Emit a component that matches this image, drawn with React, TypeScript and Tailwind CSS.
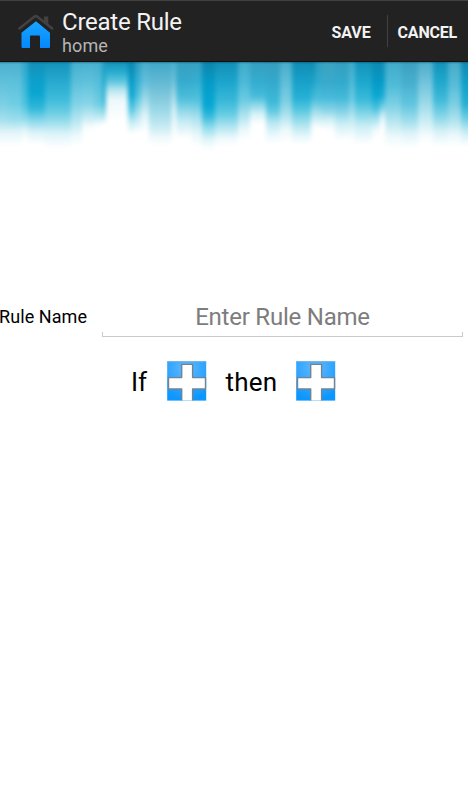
import React from "react";

type Stop = [number, string];
type Strip = { x: number; w: number; stops: Stop[] };

const strips: Strip[] = [
  { x: -12, w: 20, stops: [[0, "#4cb0cf"], [18, "#5dbfda"], [42, "#7bd0e4"], [58, "#a6dfed"], [70, "#e2f5f9"], [84, "#ffffff"]] },
  { x: 8, w: 14, stops: [[0, "#4cb0cf"], [18, "#5bbfdb"], [42, "#6fcee3"], [58, "#9cdeec"], [70, "#e2f5f9"], [84, "#ffffff"]] },
  { x: 22, w: 6, stops: [[0, "#33a6ca"], [18, "#36b3d5"], [42, "#4cc2de"], [56, "#8ad9ea"], [68, "#e2f5f9"], [78, "#ffffff"]] },
  { x: 28, w: 17, stops: [[0, "#158fb7"], [16, "#0d9ec9"], [32, "#0ba6d2"], [46, "#2fb7d9"], [58, "#85d6ea"], [70, "#d9f2f8"], [82, "#ffffff"]] },
  { x: 45, w: 26, stops: [[0, "#1593ba"], [20, "#27abd0"], [38, "#3fbddb"], [50, "#69cde2"], [60, "#9bdeec"], [72, "#ddf4f9"], [86, "#ffffff"]] },
  { x: 71, w: 11, stops: [[0, "#45afce"], [24, "#61c3de"], [44, "#86d5e7"], [60, "#bce8f2"], [74, "#eefafc"], [84, "#ffffff"]] },
  { x: 82, w: 12, stops: [[0, "#48afcd"], [20, "#5fc2dd"], [42, "#88d5e8"], [54, "#c0e9f2"], [66, "#fbfefe"], [74, "#ffffff"]] },
  { x: 94, w: 8, stops: [[0, "#45afce"], [20, "#55bfdb"], [42, "#70cee3"], [54, "#b8e8f2"], [64, "#ffffff"]] },
  { x: 102, w: 4, stops: [[0, "#1f9bc0"], [20, "#23a9cf"], [40, "#3db9d9"], [52, "#9bdeec"], [62, "#ffffff"]] },
  { x: 106, w: 22, stops: [[0, "#1592b8"], [10, "#27acd0"], [20, "#62c8df"], [28, "#b9e6f0"], [38, "#eef9fb"], [60, "#ffffff"]] },
  { x: 128, w: 7, stops: [[0, "#0b86af"], [18, "#089ac7"], [34, "#12a9d4"], [48, "#5dcae3"], [60, "#c1ebf5"], [72, "#ffffff"]] },
  { x: 135, w: 6, stops: [[0, "#309fc1"], [18, "#36afd3"], [34, "#54c2de"], [50, "#a6e0ee"], [70, "#ffffff"]] },
  { x: 141, w: 8, stops: [[0, "#48accb"], [20, "#62c0dc"], [36, "#9ad9e8"], [54, "#e0f5f9"], [70, "#ffffff"]] },
  { x: 149, w: 23, stops: [[0, "#3fa8c8"], [20, "#62b9d3"], [38, "#87ccdf"], [50, "#9fdbe9"], [64, "#c5eaf2"], [76, "#f0fafc"], [84, "#ffffff"]] },
  { x: 172, w: 4, stops: [[0, "#4bb0ce"], [20, "#75c5db"], [36, "#bae2ec"], [50, "#e9f7fa"], [70, "#ffffff"]] },
  { x: 176, w: 16, stops: [[0, "#389fbe"], [20, "#35abcf"], [36, "#4cbedb"], [48, "#8dd7e8"], [60, "#c8ecf4"], [76, "#ffffff"]] },
  { x: 192, w: 10, stops: [[0, "#36a0c0"], [20, "#35afd1"], [38, "#52c2de"], [54, "#a2dfee"], [70, "#e0f5f9"], [84, "#ffffff"]] },
  { x: 202, w: 13, stops: [[0, "#0e85ab"], [20, "#059bc7"], [44, "#07a8d4"], [54, "#34badb"], [66, "#93ddec"], [78, "#e2f6fa"], [88, "#ffffff"]] },
  { x: 215, w: 23, stops: [[0, "#138fb5"], [22, "#1ea7cf"], [40, "#3bbada"], [52, "#65cce3"], [64, "#abe3f0"], [76, "#edf9fc"], [84, "#ffffff"]] },
  { x: 238, w: 12, stops: [[0, "#41abcb"], [20, "#4db9d8"], [38, "#6bcbe2"], [50, "#a0deec"], [68, "#ecf9fb"], [78, "#ffffff"]] },
  { x: 250, w: 16, stops: [[0, "#369fbf"], [20, "#34add0"], [34, "#45bbd9"], [42, "#86d5e7"], [52, "#d6f2f8"], [62, "#ffffff"]] },
  { x: 266, w: 14, stops: [[0, "#359dbd"], [22, "#34abcf"], [40, "#3eb9d8"], [50, "#67cce2"], [60, "#b5e6f1"], [72, "#e7f7fb"], [82, "#ffffff"]] },
  { x: 280, w: 12, stops: [[0, "#48adcb"], [22, "#62c0da"], [40, "#7ed0e4"], [54, "#b1e4ef"], [68, "#edf9fb"], [80, "#ffffff"]] },
  { x: 292, w: 19, stops: [[0, "#118db4"], [18, "#179fc8"], [36, "#25b0d5"], [48, "#58c8e0"], [60, "#a0dfed"], [72, "#ddf4f9"], [82, "#ffffff"]] },
  { x: 311, w: 4, stops: [[0, "#0f88ae"], [20, "#1ba1c8"], [36, "#43bbd9"], [50, "#a4e0ed"], [64, "#f8fdfe"], [74, "#ffffff"]] },
  { x: 315, w: 6, stops: [[0, "#2c9cbe"], [20, "#2eaccf"], [38, "#51c0dc"], [52, "#b0e4ef"], [66, "#ffffff"]] },
  { x: 321, w: 14, stops: [[0, "#3da2c0"], [20, "#38aacc"], [36, "#47badb"], [48, "#87d4e7"], [58, "#d3f0f6"], [68, "#ffffff"]] },
  { x: 335, w: 14, stops: [[0, "#359ebd"], [20, "#32aacd"], [36, "#43b9d8"], [48, "#7ed0e5"], [62, "#cdeff6"], [78, "#ffffff"]] },
  { x: 349, w: 6, stops: [[0, "#41abcb"], [20, "#4fbad7"], [38, "#6ecbe1"], [54, "#b5e6f1"], [72, "#f2fbfd"], [82, "#ffffff"]] },
  { x: 355, w: 17, stops: [[0, "#1493ba"], [22, "#1eaacf"], [38, "#3bbbda"], [50, "#7bd3e6"], [64, "#c9eef5"], [82, "#ffffff"]] },
  { x: 372, w: 8, stops: [[0, "#0e89b1"], [20, "#059ac8"], [34, "#0ca6d2"], [46, "#47c0dd"], [56, "#a0dfed"], [68, "#f0fafd"], [78, "#ffffff"]] },
  { x: 380, w: 5, stops: [[0, "#108ab2"], [20, "#069bc8"], [34, "#18acd4"], [44, "#6dcde2"], [54, "#d8f2f8"], [62, "#ffffff"]] },
  { x: 385, w: 16, stops: [[0, "#40abcb"], [24, "#51bcd9"], [42, "#7ad0e4"], [60, "#b9e7f1"], [74, "#ecf9fb"], [86, "#ffffff"]] },
  { x: 401, w: 17, stops: [[0, "#3d9fbe"], [20, "#46afce"], [42, "#60c5df"], [56, "#93daea"], [72, "#dff4f9"], [86, "#ffffff"]] },
  { x: 418, w: 15, stops: [[0, "#4eadcb"], [20, "#70c3db"], [40, "#98d9e8"], [60, "#cdeff6"], [74, "#f6fcfd"], [82, "#ffffff"]] },
  { x: 433, w: 15, stops: [[0, "#1592ba"], [20, "#1fa8cd"], [38, "#41bad9"], [54, "#84d5e7"], [70, "#d9f2f8"], [84, "#ffffff"]] },
  { x: 448, w: 13, stops: [[0, "#48abca"], [22, "#56bcd8"], [42, "#7bcfe3"], [58, "#aee3ee"], [72, "#e8f7fa"], [84, "#ffffff"]] },
  { x: 461, w: 17, stops: [[0, "#1089b1"], [20, "#11a0c9"], [42, "#26b0d4"], [56, "#6ccde3"], [70, "#c9edf5"], [84, "#ffffff"]] },
];

function Curtain() {
  return (
    <svg className="block w-full h-[96px]" viewBox="0 0 468 96" preserveAspectRatio="none" aria-hidden="true">
      <defs>
        <filter id="soften" x="-12" y="-16" width="492" height="128" filterUnits="userSpaceOnUse" colorInterpolationFilters="sRGB">
          <feGaussianBlur stdDeviation="1.9 2" />
        </filter>
        <linearGradient id="shadow" x1="0" y1="0" x2="0" y2="1">
          <stop offset="0" stopColor="#003344" stopOpacity="0.4" />
          <stop offset="1" stopColor="#003344" stopOpacity="0" />
        </linearGradient>
        {strips.map((s, i) => (
          <linearGradient key={i} id={`strip${i}`} gradientUnits="userSpaceOnUse" x1="0" y1="0" x2="0" y2="96">
            {s.stops.map(([y, c]) => (
              <stop key={y} offset={y / 96} stopColor={c} />
            ))}
          </linearGradient>
        ))}
      </defs>
      <g filter="url(#soften)">
        {strips.map((s, i) => (
          <rect key={i} x={s.x} y="-16" width={s.w} height="128" fill={`url(#strip${i})`} />
        ))}
      </g>
      <rect width="468" height="2" fill="url(#shadow)" />
    </svg>
  );
}

function HomeIcon() {
  return (
    <svg width="38" height="38" viewBox="0 0 38 38" aria-hidden="true">
      <defs>
        <linearGradient id="house" x1="0" y1="0" x2="0" y2="1">
          <stop offset="0" stopColor="#18a5ff" />
          <stop offset="1" stopColor="#0588ff" />
        </linearGradient>
      </defs>
      <path d="M19 8.3 4.5 19.8V34q0 1 1 1H13V23.5q0-1 1-1h8q1 0 1 1V35h9q1 0 1-1V19.8Z" fill="url(#house)" />
      <path d="M27 3.5h4.3v9L27 9Z" fill="#414141" />
      <path d="M2.4 15.4 17.2 3.7q1.6-1.2 3.2 0L35.2 15.4" fill="none" stroke="#414141" strokeWidth="2.6" strokeLinecap="round" />
    </svg>
  );
}

function AddButton({ id }: { id: string }) {
  return (
    <button type="button" aria-label="Add" className="block size-10">
      <svg width="40" height="40" viewBox="0 0 40 40" aria-hidden="true">
        <defs>
          <radialGradient id={id} gradientUnits="userSpaceOnUse" cx="19" cy="7" r="32">
            <stop offset="0" stopColor="#64b9ff" />
            <stop offset="0.45" stopColor="#3ba9ff" />
            <stop offset="1" stopColor="#0c96ff" />
          </radialGradient>
        </defs>
        <rect x="0.2" y="0.4" width="39" height="39.2" fill={`url(#${id})`} />
        <path d="M0.2 0.9h39" stroke="#65a9dc" />
        <path d="M14.7 39.6V28H1.5V16.6H14.7V3.4H25.6V16.6H38.5V28H25.6V39.6" fill="#fff" stroke="#728491" strokeWidth="1.4" strokeLinejoin="round" />
      </svg>
    </button>
  );
}

export default function App() {
  return (
    <div className="flex h-[800px] w-[468px] flex-col overflow-hidden bg-white font-[Roboto,sans-serif] text-black">
      <header className="flex h-[62px] shrink-0 items-center border-t border-b border-t-[#414141] border-b-[#111] bg-[#222]">
        <div className="mt-0.5 ml-[17px] h-[38px] w-[38px]">
          <HomeIcon />
        </div>
        <div className="ml-[7px] flex flex-col pt-1">
          <h1 className="text-[24px] leading-[26px] tracking-[-0.24px] text-[#f3f3f3]">Create Rule</h1>
          <span className="text-[18px] leading-[22px] tracking-[0.1px] text-[#b5b5b5]">home</span>
        </div>
        <nav className="mr-[11px] ml-auto flex items-center text-[16px] font-bold text-[#f3f3f3]">
          <button type="button" className="pt-[3px] tracking-[-0.1px]">SAVE</button>
          <span className="mr-[10px] ml-4 h-8 w-px bg-[#414141]" />
          <button type="button" className="pt-[3px] tracking-[-0.2px]">CANCEL</button>
        </nav>
      </header>
      <Curtain />
      <main className="pt-[140px]">
        <div className="flex h-10">
          <label htmlFor="rule" className="-ml-px w-[103px] pt-[7px] text-[18px] leading-6 tracking-[0.08px]">Rule Name</label>
          <div className="flex h-10 w-[361px] flex-col">
            <input
              id="rule"
              placeholder="Enter Rule Name"
              className="h-[34px] w-full pt-[3px] text-center text-[24px] leading-7 tracking-[-0.22px] outline-none placeholder:text-[#7d7d7d]"
            />
            <div className="h-[5px] border-x border-b border-[#cacaca]" />
          </div>
        </div>
        <div className="mt-[23px] flex h-10 items-center text-[26px] leading-8">
          <span className="ml-[131px] w-9 pt-0.5">If</span>
          <AddButton id="if-fill" />
          <span className="ml-[18.5px] w-[70.5px] pt-0.5 tracking-[0.2px] whitespace-nowrap">then</span>
          <AddButton id="then-fill" />
        </div>
      </main>
    </div>
  );
}
